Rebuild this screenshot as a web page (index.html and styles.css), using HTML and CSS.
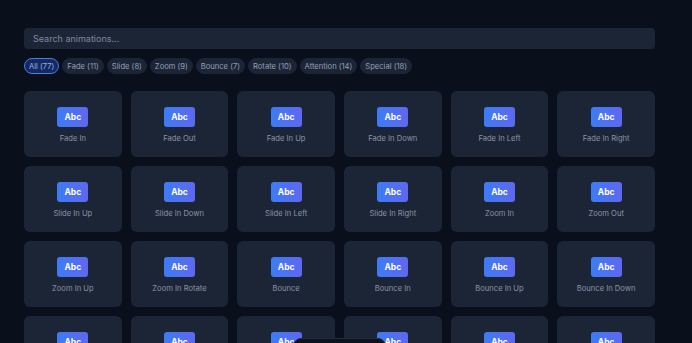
FILE: index.html
```html
<!DOCTYPE html>
<html lang="en">
<head>
<meta charset="utf-8">
<title>Animations</title>
<link rel="stylesheet" href="styles.css">
</head>
<body>
<main class="page">
  <div class="search">Search animations...</div>
  <div class="chips">
    <span class="chip active">All (77)</span>
    <span class="chip">Fade (11)</span>
    <span class="chip">Slide (8)</span>
    <span class="chip">Zoom (9)</span>
    <span class="chip">Bounce (7)</span>
    <span class="chip">Rotate (10)</span>
    <span class="chip">Attention (14)</span>
    <span class="chip">Special (18)</span>
  </div>
  <div class="grid">
    <div class="card"><span class="abc">Abc</span><span class="label">Fade In</span></div>
    <div class="card"><span class="abc">Abc</span><span class="label">Fade Out</span></div>
    <div class="card"><span class="abc">Abc</span><span class="label">Fade In Up</span></div>
    <div class="card"><span class="abc">Abc</span><span class="label">Fade In Down</span></div>
    <div class="card"><span class="abc">Abc</span><span class="label">Fade In Left</span></div>
    <div class="card"><span class="abc">Abc</span><span class="label">Fade In Right</span></div>
    <div class="card"><span class="abc">Abc</span><span class="label">Slide In Up</span></div>
    <div class="card"><span class="abc">Abc</span><span class="label">Slide In Down</span></div>
    <div class="card"><span class="abc">Abc</span><span class="label">Slide In Left</span></div>
    <div class="card"><span class="abc">Abc</span><span class="label">Slide In Right</span></div>
    <div class="card"><span class="abc">Abc</span><span class="label">Zoom In</span></div>
    <div class="card"><span class="abc">Abc</span><span class="label">Zoom Out</span></div>
    <div class="card"><span class="abc">Abc</span><span class="label">Zoom In Up</span></div>
    <div class="card"><span class="abc">Abc</span><span class="label">Zoom In Rotate</span></div>
    <div class="card"><span class="abc">Abc</span><span class="label">Bounce</span></div>
    <div class="card"><span class="abc">Abc</span><span class="label">Bounce In</span></div>
    <div class="card"><span class="abc">Abc</span><span class="label">Bounce In Up</span></div>
    <div class="card"><span class="abc">Abc</span><span class="label">Bounce In Down</span></div>
    <div class="card"><span class="abc">Abc</span><span class="label">Bounce In Left</span></div>
    <div class="card"><span class="abc">Abc</span><span class="label">Bounce In Right</span></div>
    <div class="card"><span class="abc">Abc</span><span class="label">Rotate In</span></div>
    <div class="card"><span class="abc">Abc</span><span class="label">Rotate Out</span></div>
    <div class="card"><span class="abc">Abc</span><span class="label">Rotate In Left</span></div>
    <div class="card"><span class="abc">Abc</span><span class="label">Rotate In Right</span></div>
  </div>
</main>
<div class="toast"></div>
</body>
</html>
```

FILE: styles.css
```css
html, body {
  margin: 0;
  padding: 0;
  background: #0a0f1c;
  font-family: Inter, "Liberation Sans", sans-serif;
}

.page {
  width: 631px;
  padding: 28px 0 0 24px;
}

.search {
  height: 21px;
  box-sizing: border-box;
  background: #1c2536;
  border-radius: 4px;
  padding: 0 9px;
  display: flex;
  align-items: center;
  font-size: 9px;
  color: #7f8aa0;
}

.chips {
  display: flex;
  gap: 3px;
  margin-top: 9px;
}

.chip {
  height: 16px;
  box-sizing: border-box;
  padding: 0 4px;
  border-radius: 999px;
  background: #1c2536;
  border: 1px solid #1c2536;
  color: #94a0b4;
  font-size: 7.6px;
  display: flex;
  align-items: center;
}

.chip.active {
  background: #16295a;
  border-color: #3b82f6;
  color: #8fb4ff;
}

.grid {
  margin-top: 17px;
  display: grid;
  grid-template-columns: repeat(6, 1fr);
  gap: 9px;
}

.card {
  height: 66px;
  box-sizing: border-box;
  background: #1c2536;
  border-radius: 6px;
  padding-top: 16px;
  display: flex;
  flex-direction: column;
  align-items: center;
}

.abc {
  width: 31px;
  height: 20px;
  border-radius: 3px;
  background: linear-gradient(90deg, #3d7bf5, #5e68f0);
  color: #ffffff;
  font-weight: 700;
  font-size: 8.5px;
  display: flex;
  align-items: center;
  justify-content: center;
}

.label {
  margin-top: 7px;
  font-size: 7.6px;
  color: #8a94a8;
  line-height: 10px;
}

.toast {
  position: fixed;
  left: 293px;
  top: 338px;
  width: 91px;
  height: 30px;
  background: #0d121d;
  border: 1px solid #232c3c;
  border-radius: 8px;
}
```
